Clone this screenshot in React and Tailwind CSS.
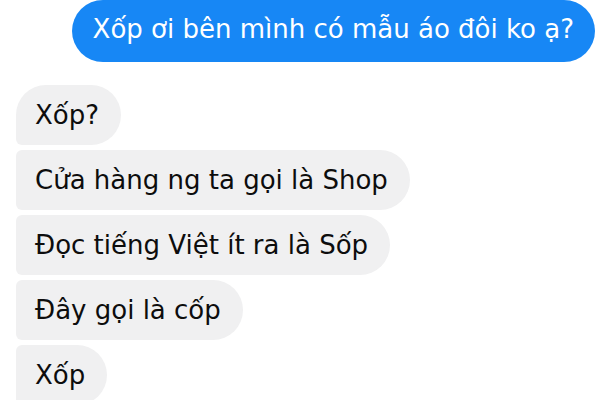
export default function App() {
  const gray = [
    { t: "Xốp?", r: "rounded-tl-[30px] rounded-bl-[6px]" },
    { t: "Cửa hàng ng ta gọi là Shop", r: "rounded-l-[6px]" },
    { t: "Đọc tiếng Việt ít ra là Sốp", r: "rounded-l-[6px]" },
    { t: "Đây gọi là cốp", r: "rounded-l-[6px]" },
    { t: "Xốp", r: "rounded-l-[6px]" },
  ];
  return (
    <div
      className="w-[600px] h-[400px] overflow-hidden bg-white"
      style={{ fontFamily: '"DejaVu Sans", "Liberation Sans", sans-serif' }}
    >
      <div className="flex flex-col">
        <div className="flex justify-end pr-[5px]">
          <div className="bg-[#1787f5] text-white text-[26px] leading-[30px] pt-[14px] pb-[18px] pl-[21px] pr-[21px] rounded-[31px] whitespace-nowrap">
            Xốp ơi bên mình có mẫu áo đôi ko ạ?
          </div>
        </div>
        <div className="flex flex-col items-start gap-[5px] pl-[16px] mt-[23px]">
          {gray.map((g, i) => (
            <div
              key={i}
              className={`bg-[#f0f0f1] text-[#0d0d0d] text-[26px] leading-[30px] py-[15px] pl-[19px] pr-[22px] rounded-r-[30px] whitespace-nowrap ${g.r}`}
            >
              {g.t}
            </div>
          ))}
        </div>
      </div>
    </div>
  );
}
